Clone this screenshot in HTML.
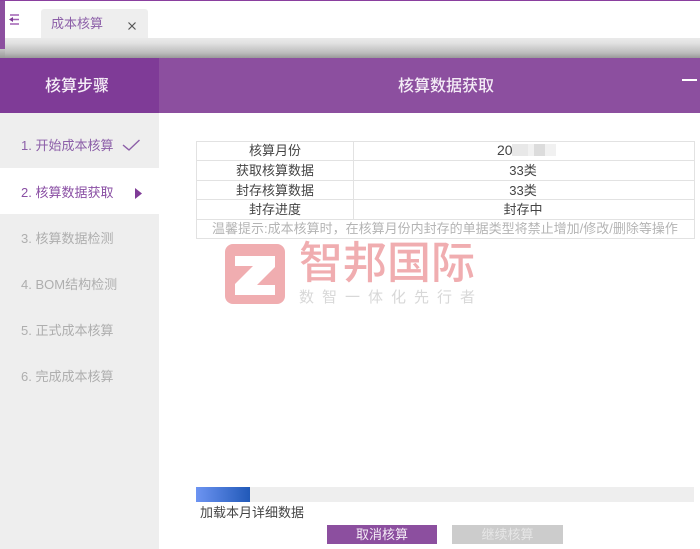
<!DOCTYPE html>
<html><head><meta charset="utf-8"><style>
html,body{margin:0;padding:0;background:#fff}
#p{position:relative;width:700px;height:549px;overflow:hidden;background:#fff;font-family:"Liberation Sans","Noto Sans CJK SC",sans-serif;font-size:13px;color:#444}
#p div{position:absolute}
.t{white-space:nowrap}
.s{left:21px;width:130px;font-size:13px;line-height:20px;color:#aeaeae;white-space:nowrap}
.c{text-align:center;white-space:nowrap;line-height:19px;font-size:13px;color:#444}
.l{background:#e2e2e2}
</style></head><body><div id="p">
<div style="left:0;top:0;width:700px;height:1px;background:#8a3f9f"></div>
<div style="left:0;top:1px;width:5px;height:48px;background:#8c4f9f"></div>
<svg style="position:absolute;left:8px;top:13px" width="12" height="13"><path d="M2 2H11M5 6.5H11M2 11H11" stroke="#a060b4" stroke-width="1.4" fill="none"/><path d="M1 6.5L5 4V9Z" fill="#7f3b97"/></svg>
<div style="left:41px;top:9px;width:107px;height:29px;background:#eee;border-radius:3px 3px 0 0"></div>
<div class="t" style="left:51px;top:14px;line-height:20px;font-size:13px;color:#8c5fa8">成本核算</div>
<svg style="position:absolute;left:127px;top:21px" width="10" height="10"><path d="M1.5 1.5L8.5 8.5M8.5 1.5L1.5 8.5" stroke="#555" stroke-width="1.2" fill="none"/></svg>
<div style="left:5px;top:38px;width:695px;height:20px;background:linear-gradient(#eaeaea,#e2e2e2 25%,#bbb 75%,#999)"></div>
<div style="left:0;top:49px;width:5px;height:9px;background:linear-gradient(#c4c4c4,#999)"></div>

<div style="left:0;top:58px;width:159px;height:55px;background:#7f3b97"></div>
<div style="left:159px;top:58px;width:541px;height:55px;background:#8c4f9f"></div>
<div class="t" style="left:45px;top:76px;font-size:16px;line-height:22px;font-weight:500;color:#f4ecf6">核算步骤</div>
<div class="t" style="left:398px;top:76px;font-size:16px;line-height:22px;font-weight:500;color:#f4ecf6">核算数据获取</div>
<div style="left:682px;top:79px;width:15px;height:2px;background:#fff"></div>

<div style="left:0;top:113px;width:159px;height:436px;background:#eee"></div>
<div style="left:0;top:168px;width:159px;height:46px;background:#fff"></div>
<div class="s" style="top:136px;color:#8c5fa8">1. 开始成本核算</div>
<svg style="position:absolute;left:122px;top:138px" width="20" height="14"><path d="M1 7L7 12L17.5 2" stroke="#8c5fa8" stroke-width="1.4" fill="none"/></svg>
<div class="s" style="top:183px;color:#8a4fa4">2. 核算数据获取</div>
<svg style="position:absolute;left:134px;top:187px" width="9" height="13"><path d="M1 1L8 6.5L1 12Z" fill="#7f3b97"/></svg>
<div class="s" style="top:229px">3. 核算数据检测</div>
<div class="s" style="top:275px">4. BOM结构检测</div>
<div class="s" style="top:321px">5. 正式成本核算</div>
<div class="s" style="top:367px">6. 完成成本核算</div>

<!-- table -->
<div class="l" style="left:196px;top:141px;width:499px;height:1px"></div>
<div class="l" style="left:196px;top:160px;width:499px;height:1px"></div>
<div class="l" style="left:196px;top:180px;width:499px;height:1px"></div>
<div class="l" style="left:196px;top:199px;width:499px;height:1px"></div>
<div class="l" style="left:196px;top:219px;width:499px;height:1px"></div>
<div class="l" style="left:196px;top:238px;width:499px;height:1px"></div>
<div class="l" style="left:196px;top:141px;width:1px;height:98px"></div>
<div class="l" style="left:694px;top:141px;width:1px;height:98px"></div>
<div class="l" style="left:353px;top:141px;width:1px;height:78px"></div>
<div class="c" style="left:197px;top:141px;width:156px">核算月份</div>
<div class="c" style="left:197px;top:161px;width:156px">获取核算数据</div>
<div class="c" style="left:197px;top:181px;width:156px">封存核算数据</div>
<div class="c" style="left:197px;top:200px;width:156px">封存进度</div>
<div class="t" style="left:497px;top:141px;line-height:19px;font-size:14px;color:#444">20</div>
<div style="left:512px;top:144px;width:44px;height:12px;background:#f1f1f1"></div>
<div style="left:512px;top:144px;width:16px;height:12px;background:#e8e8e8"></div>
<div style="left:534px;top:144px;width:11px;height:12px;background:#dcdcdc"></div>
<div class="c" style="left:353px;top:161px;width:340px">33类</div>
<div class="c" style="left:353px;top:181px;width:340px">33类</div>
<div class="c" style="left:353px;top:200px;width:340px">封存中</div>
<div class="t" style="left:212px;top:219px;line-height:19px;font-size:13px;color:#b4b4b4">温馨提示:成本核算时，在核算月份内封存的单据类型将禁止增加/修改/删除等操作</div>

<!-- watermark -->
<div style="left:225px;top:244px;width:60px;height:60px;border-radius:8px;background:#f0adb0"></div>
<svg style="position:absolute;left:225px;top:244px" width="60" height="60"><path d="M10 12H50V23L32 41H50V51H10V40L28 22H10Z" fill="#fff"/></svg>
<div class="t" style="left:299px;top:238px;font-size:44px;line-height:52px;font-weight:500;color:#f0adb0">智邦国际</div>
<div class="t" style="left:299px;top:288px;font-size:15px;line-height:19px;letter-spacing:8px;color:#d8d8d8">数智一体化先行者</div>

<!-- progress -->
<div style="left:196px;top:487px;width:498px;height:15px;background:#eee"></div>
<div style="left:196px;top:487px;width:54px;height:15px;background:linear-gradient(90deg,#6d94f2,#2159b8)"></div>
<div class="t" style="left:200px;top:503px;line-height:19px;font-size:13px;color:#444">加载本月详细数据</div>
<div class="t" style="left:327px;top:525px;width:110px;height:19px;background:#8c4f9f;color:#f4ecf6;text-align:center;line-height:19px;font-size:13px">取消核算</div>
<div class="t" style="left:452px;top:525px;width:111px;height:19px;background:#ccc;color:#e6e6e6;text-align:center;line-height:19px;font-size:13px">继续核算</div>
</div></body></html>
